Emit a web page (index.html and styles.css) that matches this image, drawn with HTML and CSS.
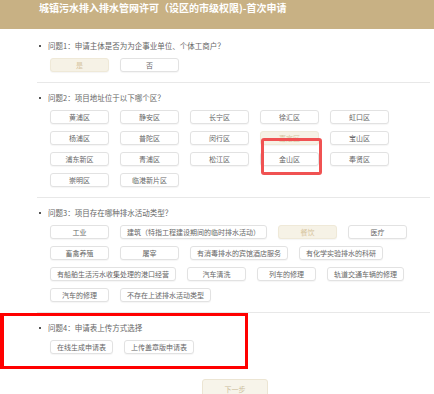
FILE: index.html
```html
<html>
  <head>
    <meta charset="utf-8">
    <link rel="stylesheet" href="styles.css">
    <title>首次申请</title>
  </head>
  <body>
    <div class="header">城镇污水排入排水管网许可（设区的市级权限)-首次申请</div>

    <div class="content">
      <div class="section">
        <div class="question"><span class="dot"></span>问题1：申请主体是否为为企事业单位、个体工商户？</div>
        <div class="options">
          <span class="opt on">是</span>
          <span class="opt">否</span>
        </div>
      </div>

      <div class="section">
        <div class="question"><span class="dot"></span>问题2：项目地址位于以下哪个区？</div>
        <div class="options">
          <span class="opt">黄浦区</span>
          <span class="opt">静安区</span>
          <span class="opt">长宁区</span>
          <span class="opt">徐汇区</span>
          <span class="opt">虹口区</span>
          <span class="opt">杨浦区</span>
          <span class="opt">普陀区</span>
          <span class="opt">闵行区</span>
          <span class="opt on">嘉定区</span>
          <span class="opt">宝山区</span>
          <span class="opt">浦东新区</span>
          <span class="opt">青浦区</span>
          <span class="opt">松江区</span>
          <span class="opt">金山区</span>
          <span class="opt">奉贤区</span>
          <span class="opt">崇明区</span>
          <span class="opt">临港新片区</span>
        </div>
      </div>

      <div class="section">
        <div class="question"><span class="dot"></span>问题3：项目存在哪种排水活动类型？</div>
        <div class="options">
          <span class="opt">工业</span>
          <span class="opt">建筑（特指工程建设期间的临时排水活动）</span>
          <span class="opt on">餐饮</span>
          <span class="opt">医疗</span>
          <span class="opt">畜禽养殖</span>
          <span class="opt">屠宰</span>
          <span class="opt">有消毒排水的宾馆酒店服务</span>
          <span class="opt">有化学实验排水的科研</span>
          <span class="opt">有船舶生活污水收集处理的港口经营</span>
          <span class="opt">汽车清洗</span>
          <span class="opt">列车的修理</span>
          <span class="opt">轨道交通车辆的修理</span>
          <span class="opt">汽车的修理</span>
          <span class="opt">不存在上述排水活动类型</span>
        </div>
      </div>

      <div class="section last">
        <div class="question"><span class="dot"></span>问题4：申请表上传方式选择</div>
        <div class="options">
          <span class="opt">在线生成申请表</span>
          <span class="opt">上传盖章版申请表</span>
        </div>
      </div>

      <div class="footer">
        <span class="next">下一步</span>
      </div>
    </div>

    <!-- annotation boxes drawn over the page -->
    <div class="mark mark-district"></div>
    <div class="mark mark-upload"></div>
  </body>
</html>
```

FILE: styles.css
```css
body {
  margin: 0;
  width: 434px;
  height: 394px;
  overflow: hidden;
  background-color: #fff;
  font-family: "Noto Sans CJK SC", "Noto Sans", sans-serif;
  position: relative;
}

.header {
  height: 29px;
  background-color: rgb(200, 177, 132);
  color: #fff;
  font-size: 10px;
  font-weight: bold;
  line-height: 15px;
  padding-left: 39px;
  box-sizing: border-box;
}

.content {
  margin-left: 37px;
  margin-right: 4px;
}

.section {
  padding-top: 10px;
  padding-bottom: 10px;
  border-bottom: 1px solid #e8e8e8;
}

.section:first-child {
  padding-top: 12px;
}

.section.last {
  border-bottom: none;
}

.question {
  display: flex;
  align-items: center;
  gap: 7px;
  padding-left: 2px;
  font-size: 7.5px;
  line-height: 10px;
  color: #666;
  margin-bottom: 7px;
}

.dot {
  width: 2px;
  height: 2px;
  background-color: #555;
}

.options {
  display: flex;
  flex-wrap: wrap;
  gap: 7px 11px;
  padding-left: 13px;
}

.opt {
  min-width: 59px;
  height: 14px;
  box-sizing: border-box;
  padding: 0 6px;
  border: 1px solid #e2e2e2;
  border-radius: 3px;
  background-color: #fff;
  box-shadow: 0 1px 1px rgba(0, 0, 0, 0.04);
  font-size: 7px;
  line-height: 12px;
  color: #666;
  text-align: center;
  white-space: nowrap;
}

.opt.on {
  background-color: #f6f2e6;
  border-color: #efe9d8;
  color: #d6c59f;
}

.footer {
  padding-top: 15px;
  padding-left: 165px;
}

.next {
  display: inline-block;
  width: 66px;
  height: 20px;
  box-sizing: border-box;
  border: 1px solid #ece5d3;
  border-radius: 3px;
  background-color: #f7f4ea;
  color: #cbbd9c;
  font-size: 7px;
  line-height: 18px;
  text-align: center;
}

.mark {
  position: absolute;
  box-sizing: border-box;
}

.mark-district {
  left: 261px;
  top: 138px;
  width: 61px;
  height: 37px;
  border: 3px solid rgb(240, 82, 82);
  border-radius: 3px;
}

.mark-upload {
  left: 0;
  top: 313px;
  width: 248px;
  height: 56px;
  border: 3px solid #f00;
  border-left-width: 4px;
}
```
